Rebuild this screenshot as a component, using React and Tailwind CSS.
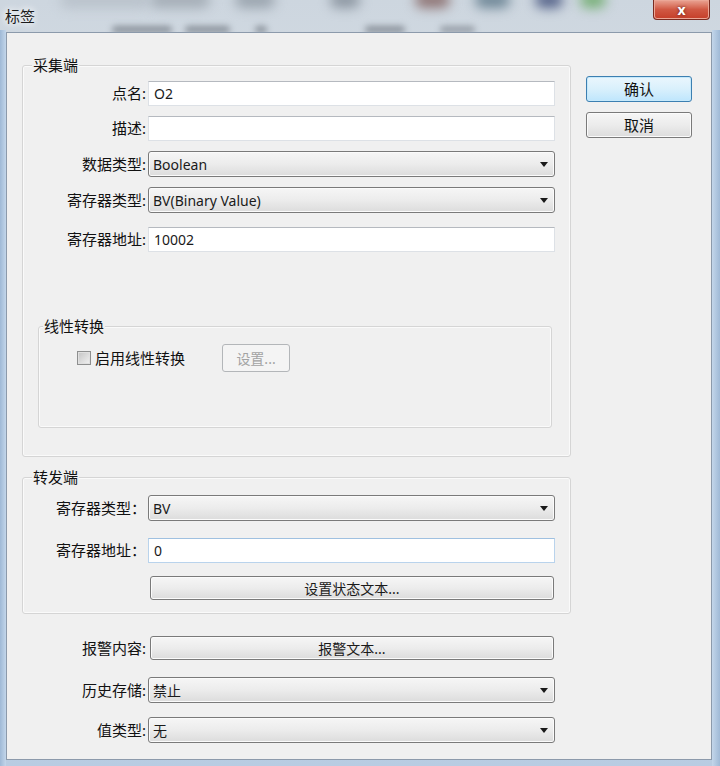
import React from 'react';

// Win7-style "标签" dialog

function Arrow() {
    return (
        <svg width="8" height="5" viewBox="0 0 8 5" className="ml-auto shrink-0">
            <path d="M0 0 H8 L4 5 Z" fill="#1a1a1a" />
        </svg>
    );
}

function Select({ value, className = '' }) {
    return (
        <div className={`flex h-[26px] w-[407px] items-center rounded-[3px] border border-[#7a7a7a] bg-gradient-to-b from-[#f6f6f6] via-[#ececec] to-[#dcdcdc] pl-[4px] pr-[6px] text-[14px] text-[#1a1a1a] shadow-[inset_0_0_0_1px_#fbfbfb] ${className}`}>
            <span>{value}</span>
            <Arrow />
        </div>
    );
}

function Input({ value, focus = false, className = '' }) {
    const border = focus
        ? 'border-[#b9d3ec] border-t-[#9fc0e0]'
        : 'border-[#dde1e6] border-t-[#b5b9bf]';
    return (
        <div className={`flex h-[25px] w-[407px] items-center border bg-white pl-[5px] text-[14px] text-[#1a1a1a] ${border} ${className}`}>
            {value}
        </div>
    );
}

function WideButton({ children, className = '' }) {
    return (
        <div className={`ml-[2px] flex h-[24px] w-[404px] items-center justify-center rounded-[3px] border border-[#7a7a7a] bg-gradient-to-b from-[#f6f6f6] via-[#ececec] to-[#dcdcdc] text-[14px] text-[#1a1a1a] shadow-[inset_0_0_0_1px_#fbfbfb] ${className}`}>
            {children}
        </div>
    );
}

function Row({ label, labelWidth, children, className = '' }) {
    return (
        <div className={`flex items-center ${className}`}>
            <div className="shrink-0 text-right text-[15px] text-[#111]" style={{ width: labelWidth }}>{label}</div>
            <div className="ml-[2px]">{children}</div>
        </div>
    );
}

function GroupLabel({ children, className = '' }) {
    return (
        <span className={`absolute top-[-11px] bg-[#f0f0f0] px-[1px] text-[15px] leading-[20px] text-[#111] ${className}`}>
            {children}
        </span>
    );
}

export default function App() {
    return (
        <div className="relative h-[766px] w-[720px] overflow-hidden bg-gradient-to-b from-[#cdd6df] via-[#e2e7ec] to-[#b8cce2] font-['Noto_Sans','Noto_Sans_CJK_SC',sans-serif]">
            {/* blurred desktop behind the glass title bar */}
            <div className="absolute left-[60px] top-[-8px] h-[16px] w-[90px] rounded-full bg-[#b9c2cb] blur-[6px]" />
            <div className="absolute left-[150px] top-[-8px] h-[16px] w-[60px] rounded-full bg-[#a4adb6] blur-[6px]" />
            <div className="absolute left-[235px] top-[-8px] h-[16px] w-[40px] rounded-full bg-[#9aa4ae] blur-[6px]" />
            <div className="absolute left-[330px] top-[-8px] h-[16px] w-[30px] rounded-full bg-[#8d97a2] blur-[6px]" />
            <div className="absolute left-[415px] top-[-8px] h-[16px] w-[35px] rounded-full bg-[#8f7575] blur-[6px]" />
            <div className="absolute left-[475px] top-[-8px] h-[16px] w-[35px] rounded-full bg-[#6f8797] blur-[6px]" />
            <div className="absolute left-[535px] top-[-8px] h-[16px] w-[28px] rounded-full bg-[#56648a] blur-[6px]" />
            <div className="absolute left-[580px] top-[-8px] h-[16px] w-[26px] rounded-full bg-[#78b078] blur-[6px]" />
            <div className="absolute left-[112px] top-[26px] h-[7px] w-[60px] rounded-full bg-[#8a929b] blur-[3px]" />
            <div className="absolute left-[185px] top-[26px] h-[7px] w-[45px] rounded-full bg-[#8a929b] blur-[3px]" />
            <div className="absolute left-[255px] top-[26px] h-[7px] w-[12px] rounded-full bg-[#8a929b] blur-[3px]" />
            <div className="absolute left-[365px] top-[26px] h-[7px] w-[40px] rounded-full bg-[#8a929b] blur-[3px]" />
            <div className="absolute left-[440px] top-[26px] h-[7px] w-[35px] rounded-full bg-[#969ea7] blur-[3px]" />
            <div className="absolute left-[0px] top-[30px] h-[736px] w-[6px] bg-gradient-to-r from-[#9fb9d6] to-[#c3d6ea]" />
            <div className="absolute right-[0px] top-[30px] h-[736px] w-[8px] bg-gradient-to-l from-[#9fb9d6] to-[#c3d6ea]" />

            {/* title bar */}
            <div className="relative flex h-[32px] items-start">
                <span className="ml-[5px] mt-[6px] text-[15px] leading-[20px] text-[#1b1b1b] [text-shadow:0_0_6px_#ffffff,0_0_10px_#ffffff]">标签</span>
                <div className="ml-auto mr-[10px] flex h-[20px] w-[57px] items-center justify-center rounded-b-[4px] border border-t-0 border-[#7a2b20] bg-gradient-to-b from-[#e9a494] via-[#d05843] to-[#c53d28] shadow-[inset_0_0_0_1px_#eba797]">
                    <span className="text-[14px] font-bold leading-none text-white [text-shadow:0_0_3px_#5a1a10]">x</span>
                </div>
            </div>

            {/* client area */}
            <div className="relative ml-[6px] flex h-[728px] w-[706px] border border-[#8c9aab] bg-[#f0f0f0] pl-[15px]">
                <div className="w-[549px]">
                    {/* 采集端 */}
                    <div className="relative mt-[32px] h-[392px] rounded-[3px] border border-[#d5d5d5] pt-[15px] shadow-[inset_0_0_0_1px_#fafafa]">
                        <GroupLabel className="left-[9px]">采集端</GroupLabel>
                        <Row label="点名:" labelWidth={123}><Input value="O2" /></Row>
                        <Row label="描述:" labelWidth={123} className="mt-[10px]"><Input value="" /></Row>
                        <Row label="数据类型:" labelWidth={123} className="mt-[10px]"><Select value="Boolean" /></Row>
                        <Row label="寄存器类型:" labelWidth={123} className="mt-[10px]"><Select value="BV(Binary Value)" /></Row>
                        <Row label="寄存器地址:" labelWidth={123} className="mt-[14px]"><Input value="10002" /></Row>

                        {/* 线性转换 */}
                        <div className="relative ml-[15px] mt-[74px] h-[102px] w-[514px] rounded-[3px] border border-[#d5d5d5] pt-[17px] shadow-[inset_0_0_0_1px_#fafafa]">
                            <GroupLabel className="left-[4px]">线性转换</GroupLabel>
                            <div className="flex items-center">
                                <div className="ml-[38px] h-[14px] w-[14px] border border-[#8e8f8f] bg-gradient-to-br from-[#c4c4c4] to-[#f2f2f2] shadow-[inset_0_0_0_1px_#e0e0e0]" />
                                <span className="ml-[4px] text-[15px] text-[#111]">启用线性转换</span>
                                <div className="ml-[37px] flex h-[28px] w-[68px] items-center justify-center rounded-[3px] border border-[#b3b6b9] bg-[#f4f4f4] text-[14px] text-[#a3a3a3]">
                                    设置...
                                </div>
                            </div>
                        </div>
                    </div>

                    {/* 转发端 */}
                    <div className="relative mt-[20px] h-[137px] rounded-[3px] border border-[#d5d5d5] pt-[17px] shadow-[inset_0_0_0_1px_#fafafa]">
                        <GroupLabel className="left-[9px]">转发端</GroupLabel>
                        <Row label="寄存器类型：" labelWidth={123}><Select value="BV" /></Row>
                        <Row label="寄存器地址：" labelWidth={123} className="mt-[17px]"><Input value="0" focus /></Row>
                        <Row label="" labelWidth={123} className="mt-[13px]"><WideButton>设置状态文本...</WideButton></Row>
                    </div>

                    <Row label="报警内容:" labelWidth={124} className="mt-[22px]"><WideButton className="h-[23px]">报警文本...</WideButton></Row>
                    <Row label="历史存储:" labelWidth={124} className="mt-[17px]"><Select value="禁止" className="h-[25px]" /></Row>
                    <Row label="值类型:" labelWidth={124} className="mt-[14px]"><Select value="无" className="h-[25px]" /></Row>
                </div>

                {/* buttons */}
                <div className="ml-[15px] mt-[43px] flex w-[106px] flex-col">
                    <div className="flex h-[26px] items-center justify-center rounded-[3px] border border-[#3c7fb1] bg-gradient-to-b from-[#eaf6fd] via-[#d9f0fc] to-[#bee6fd] text-[15px] text-[#111] shadow-[inset_0_0_0_1px_#c6e9fb]">
                        确认
                    </div>
                    <div className="mt-[10px] flex h-[26px] items-center justify-center rounded-[3px] border border-[#7a7a7a] bg-gradient-to-b from-[#f6f6f6] via-[#ececec] to-[#dcdcdc] text-[15px] text-[#111] shadow-[inset_0_0_0_1px_#fbfbfb]">
                        取消
                    </div>
                </div>
            </div>
        </div>
    );
}
